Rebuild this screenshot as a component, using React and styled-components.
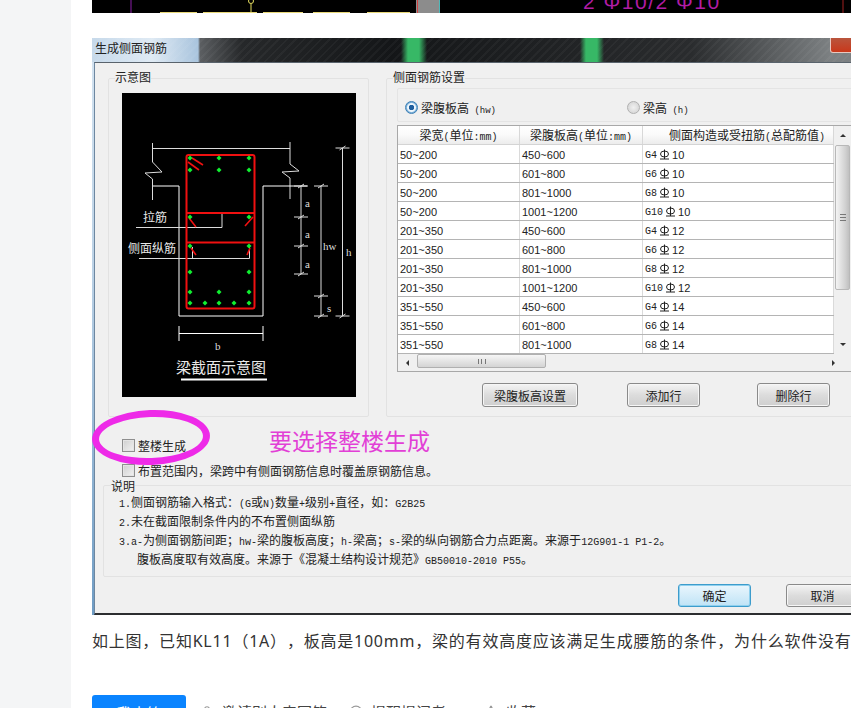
import React from 'react';
import styled, { createGlobalStyle } from 'styled-components';
import { User, Clock, Star } from 'lucide-react';

const cjk = `"Noto Sans CJK SC", sans-serif`;
const mono = `"Liberation Mono", "Noto Sans CJK SC", monospace`;

const rows = [
  ['50~200', '450~600', 'G4', '10'],
  ['50~200', '601~800', 'G6', '10'],
  ['50~200', '801~1000', 'G8', '10'],
  ['50~200', '1001~1200', 'G10', '10'],
  ['201~350', '450~600', 'G4', '12'],
  ['201~350', '601~800', 'G6', '12'],
  ['201~350', '801~1000', 'G8', '12'],
  ['201~350', '1001~1200', 'G10', '12'],
  ['351~550', '450~600', 'G4', '14'],
  ['351~550', '601~800', 'G6', '14'],
  ['351~550', '801~1000', 'G8', '14'],
];

const GlobalStyle = createGlobalStyle`
  html, body {
    margin: 0;
    height: 708px;
    overflow: hidden;
    background: #fff;
    font-family: ${cjk};
  }
`;

const Page = styled.div`
  display: flex;
  width: 851px;
  height: 708px;
  overflow: hidden;
`;

const Gutter = styled.div`
  width: 71px;
  flex: none;
  background: #f4f5f6;
`;

const Main = styled.main`
  flex: 1;
  min-width: 0;
  padding-left: 21px;
  overflow: hidden;
`;

const TopStrip = styled.svg`
  display: block;
  width: 759px;
  height: 13px;
  margin-bottom: 25px;
  background: #000;
`;

const Dialog = styled.div`
  position: relative;
  width: 790px;
  height: 577px;
  background: linear-gradient(180deg, #d5e4f1 0, #bcd2e6 40%, #6f9cc4 100%);
`;

const TitleBar = styled.div`
  display: flex;
  height: 24px;
  background:
    linear-gradient(90deg, transparent 309px, #37b866 316px, #37b866 327px, transparent 335px, transparent 488px, #37b866 494px, #37b866 505px, transparent 512px),
    repeating-linear-gradient(135deg, rgba(255, 255, 255, 0.035) 0 2px, transparent 2px 6px),
    linear-gradient(90deg, #c6d9ea 0, #dfeaf4 60px, #a9c4dd 106px, #5c5f62 108px, #26282a 150px, #141618 300px, #2a2c2e 600px, #7c8082 738px);
`;

const Title = styled.span`
  padding: 2px 0 0 3px;
  font-size: 12px;
  line-height: 16px;
  color: #222;
`;

const CloseButton = styled.div`
  width: 42px;
  height: 15px;
  margin-left: auto;
  margin-right: 10px;
  border: 1px solid #e8c8c0;
  border-top: 0;
  border-radius: 0 0 3px 3px;
  box-sizing: border-box;
  background: linear-gradient(180deg, #b9553d, #c9381b);
`;

const Body = styled.div`
  height: 553px;
  margin-left: 2px;
  padding-top: 8px;
  box-sizing: border-box;
  background: #f0f0f0;
  border-left: 1px solid #6d87a0;
  border-top: 1px solid #59636c;
  border-bottom: 2px solid #2c2e30;
`;

const TopRow = styled.div`
  display: flex;
  gap: 17px;
  margin-left: 13px;
`;

const Group = styled.fieldset`
  display: block;
  width: ${p => p.$width}px;
  flex: none;
  min-width: 0;
  margin: 0;
  padding: ${p => p.$padding};
  box-sizing: border-box;
  border: 1px solid #e2e2e2;
  border-radius: 2px;
`;

const NotesGroup = styled(Group)`
  margin: 1px 0 0 8px;
`;

const Legend = styled.legend`
  margin-left: ${p => p.$left}px;
  padding: 0;
  height: 14px;
  font-size: 12px;
  line-height: ${p => p.$line || 12}px;
  color: #222;
`;

const DiagramSvg = styled.svg`
  display: block;
  width: 234px;
  height: 304px;
  background: #000;
`;

const RadioBox = styled.div`
  display: flex;
  align-items: center;
  height: 34px;
  padding-left: 7px;
  box-sizing: border-box;
  border: 1px solid #e4e4e4;
  border-radius: 2px;
`;

const RadioLabel = styled.label`
  display: flex;
  align-items: center;
  gap: 3px;
  width: ${p => p.$width}px;
  margin-top: 4px;
  font-size: 12px;
  color: #222;
`;

const RadioDot = styled.span`
  width: 13px;
  height: 13px;
  flex: none;
  box-sizing: border-box;
  border-radius: 50%;
  border: 1px solid ${p => (p.$on ? '#3d7fb5' : '#b0b0b0')};
  background: ${p =>
    p.$on
      ? 'radial-gradient(circle, #1f5f9e 0 2.5px, #eef6fc 3px 4px, #7fb3da 5px)'
      : 'radial-gradient(circle, #f0f0f0 0, #d0d0d0 100%)'};
`;

const Mini = styled.span`
  font-family: ${mono};
  font-size: ${p => p.$size || 10}px;
  line-height: 1;
  white-space: pre;
`;

const BarCode = styled(Mini)`
  padding-top: 2px;
`;

const TableFrame = styled.div`
  width: 456px;
  margin-top: 3px;
  box-sizing: border-box;
  border: 1px solid #a8a8a8;
  border-right: 0;
  background: #fff;
`;

const TableTop = styled.div`
  display: flex;
  height: 228px;
  overflow: hidden;
`;

const Cells = styled.div`
  width: 436px;
  flex: none;
`;

const Row = styled.div`
  display: grid;
  grid-template-columns: 122px 123px 191px;
  height: 19px;
  box-sizing: border-box;
  border-bottom: 1px solid #b4b4b4;
`;

const HeadRow = styled(Row)`
  background: linear-gradient(180deg, #fff 0, #fafafa 50%, #ececec 100%);
  border-bottom: 1px solid #d4d4d4;
`;

const HeadCell = styled.div`
  padding-left: ${p => p.$shift || 0}px;
  font-size: 12px;
  line-height: 17px;
  text-align: center;
  color: #222;
  white-space: nowrap;
  overflow: hidden;
  border-right: 1px solid #d8d8d8;
`;

const Cell = styled.div`
  display: flex;
  align-items: center;
  gap: 2px;
  padding: 1px 0 0 2px;
  font-family: "Liberation Sans", sans-serif;
  font-size: 11px;
  color: #222;
  border-right: 1px solid #dadada;
`;

const VScroll = styled.div`
  width: 17px;
  flex: none;
  background: #f0f0f0;
  display: flex;
  flex-direction: column;
  align-items: center;
`;

const ArrowBox = styled.div`
  height: ${p => p.$h}px;
  width: ${p => p.$w || 17}px;
  display: flex;
  align-items: center;
  justify-content: center;
  flex: none;
`;

const Arrow = styled.span`
  width: 0;
  height: 0;
  border-style: solid;
  border-color: transparent;
  ${p => p.$dir === 'up' && 'border-width: 0 3px 3px; border-bottom-color: #333;'}
  ${p => p.$dir === 'down' && 'border-width: 3px 3px 0; border-top-color: #333;'}
  ${p => p.$dir === 'left' && 'border-width: 3px 3px 3px 0; border-right-color: #333;'}
  ${p => p.$dir === 'right' && 'border-width: 3px 0 3px 3px; border-left-color: #333;'}
`;

const VThumb = styled.div`
  width: 15px;
  height: 145px;
  flex: none;
  display: flex;
  align-items: center;
  justify-content: center;
  box-sizing: border-box;
  border: 1px solid #b8b8b8;
  border-radius: 2px;
  background: linear-gradient(90deg, #f4f4f4, #d2d2d2 70%, #c0c0c0);
`;

const VGrip = styled.span`
  width: 6px;
  height: 5px;
  border-top: 1px solid #777;
  border-bottom: 1px solid #777;
  background: linear-gradient(180deg, transparent 2px, #777 2px, #777 3px, transparent 3px);
`;

const Spacer = styled.div`
  flex: 1;
`;

const HScroll = styled.div`
  display: flex;
  align-items: center;
  height: 17px;
  background: #f0f0f0;
`;

const HThumb = styled.div`
  width: 129px;
  height: 14px;
  margin-top: -3px;
  box-sizing: border-box;
  border: 1px solid #b0b0b0;
  border-radius: 2px;
  background: linear-gradient(180deg, #f6f6f6, #d4d4d4);
  display: flex;
  align-items: center;
  justify-content: center;
`;

const HGrip = styled.span`
  width: 6px;
  height: 5px;
  border-left: 1px solid #777;
  border-right: 1px solid #777;
  background: linear-gradient(90deg, transparent 2px, #777 2px, #777 3px, transparent 3px);
`;

const ButtonRow = styled.div`
  display: flex;
  padding-left: ${p => p.$left}px;
  margin-top: ${p => p.$top}px;
`;

const WinButton = styled.button`
  width: ${p => p.$width}px;
  height: ${p => p.$height || 24}px;
  margin-left: ${p => p.$gap || 0}px;
  padding: 0;
  flex: none;
  font-family: ${cjk};
  font-size: 12px;
  color: #222;
  border-radius: 3px;
  border: 1px solid ${p => (p.$primary ? '#3d9ccc' : '#8a8a8a')};
  background: ${p =>
    p.$primary
      ? 'linear-gradient(180deg, #eaf6fd, #bfe3f6)'
      : 'linear-gradient(180deg, #f4f4f4, #dcdcdc 50%, #cfcfcf)'};
  box-shadow: ${p => (p.$primary ? 'inset 0 0 0 1px #8fd0ee' : 'inset 0 0 0 1px #f6f6f6')};
`;

const CheckRow = styled.div`
  display: flex;
  align-items: center;
  gap: 3px;
  height: 13px;
  margin: ${p => p.$top}px 0 0 27px;
  font-size: 12px;
  color: #222;
  white-space: nowrap;
`;

const CheckBox = styled.span`
  width: 13px;
  height: 13px;
  flex: none;
  box-sizing: border-box;
  border: 1px solid #8e8e8e;
  background: linear-gradient(135deg, #cfcfcf, #f2f2f2);
  box-shadow: inset 0 0 0 1px #e4e4e4;
`;

const Ellipse = styled.div`
  position: absolute;
  left: 0;
  top: 372px;
  width: 118px;
  height: 55px;
  box-sizing: border-box;
  border: 7px solid #ee2ae8;
  border-radius: 50%;
  transform: rotate(-2deg);
`;

const Annotation = styled.div`
  position: absolute;
  left: 177px;
  top: 387px;
  font-size: 23px;
  line-height: 30px;
  color: #e23fd6;
  white-space: nowrap;
`;

const Notes = styled.ul`
  list-style: none;
  margin: 0;
  padding: 0 0 8px 15px;
  font-size: 12px;
  color: #222;
  white-space: nowrap;
`;

const NoteLine = styled.li`
  height: 19px;
  line-height: 19px;
  padding-left: ${p => p.$indent || 0}px;
`;

const Question = styled.p`
  margin: 14px 0 0;
  font-family: "Noto Sans", "Noto Sans CJK SC", sans-serif;
  font-size: 16px;
  line-height: 24px;
  letter-spacing: 0.78px;
  text-spacing-trim: space-all;
  color: #333;
  white-space: nowrap;
`;

const Actions = styled.div`
  display: flex;
  align-items: flex-start;
  margin-top: 42px;
`;

const AnswerButton = styled.button`
  width: 94px;
  height: 35px;
  flex: none;
  padding: 0;
  border: 0;
  border-radius: 3px;
  background: #0a84ff;
  color: #fff;
  font-family: ${cjk};
  font-size: 15px;
`;

const Action = styled.div`
  display: flex;
  align-items: center;
  gap: 8px;
  margin: 6px 0 0 ${p => p.$gap}px;
  font-size: 15px;
  line-height: 22px;
  color: #444;
  white-space: nowrap;

  svg {
    width: 14px;
    height: 14px;
    color: #999;
  }
`;

const Rebar = () => (
  <svg width="11" height="11" viewBox="0 0 11 11" fill="none" stroke="#222" strokeWidth="1">
    <ellipse cx="5.5" cy="5" rx="4" ry="3" />
    <path d="M5.5 0.5V10M1 10H10" />
  </svg>
);

const strip = [[68, 105], [111, 165], [171, 211], [221, 258], [275, 318]];

const CadStrip = () => (
  <TopStrip viewBox="0 0 759 13">
    <path d="M39 0V13" stroke="#8a1fa8" />
    <path d="M159 4V13" stroke="#e8e060" />
    <circle cx="159" cy="1" r="2.5" fill="none" stroke="#e8e060" />
    {strip.map(([a, b]) => (
      <path key={a} d={`M${a} 12.5H${b}`} stroke="#e8d878" />
    ))}
    <rect x="324" y="0" width="24" height="13" fill="#8c8c8c" />
    <path d="M325.5 0V13" stroke="#d04040" />
    <path d="M347.5 0V13" stroke="#50b8b8" />
    <text x="491" y="9" fontFamily="Liberation Sans" fontSize="21" fill="#b01ca4" letterSpacing="1.5">2 Φ10/2 Φ10</text>
    <path d="M751 0V13" stroke="#a02020" />
  </TopStrip>
);

const greenDots = [
  [68, 65], [97, 65], [127, 65], [68, 77], [97, 77], [127, 77],
  [68, 124], [127, 124], [68, 153], [127, 153], [68, 179], [127, 179],
  [68, 199], [97, 199], [127, 199], [68, 210], [83, 210], [97, 210], [112, 210], [127, 210],
];

const Tick = ({ x, y, w = 7 }) => (
  <path d={`M${x - w} ${y}H${x + w}M${x - 3} ${y + 2}L${x + 3} ${y - 2}`} stroke="#ddd" strokeWidth="1" fill="none" />
);

const labelFont = { fontFamily: 'Noto Sans CJK SC', fill: '#e8e8e8' };
const dimFont = { fontFamily: 'Liberation Serif', fontSize: 11, fill: '#ddd' };

const Diagram = () => (
  <DiagramSvg viewBox="0 0 234 304">
    <g fill="none" stroke="#dcdcdc" strokeWidth="1">
      <path d="M31 55.5H168" />
      <path d="M30.5 50V69L40 79L23 80L30.5 86V107" />
      <path d="M168 49V71L177 78L160 79L168 85V106" />
      <path d="M31 93H57V223H141V93H185" stroke="#fff" />
      <path d="M179 93V181" />
      <path d="M199 93V223" />
      <path d="M220.5 55V223" />
      <path d="M57 240.5H141M57 233V248M141 233V248" stroke="#fff" />
      <path d="M14 134.5H100V120" />
      <path d="M17 165.5H127.5V154M70.5 165.5V154" />
    </g>
    <Tick x={179} y={93} />
    <Tick x={179} y={124} />
    <Tick x={179} y={153} />
    <Tick x={179} y={181} />
    <Tick x={199} y={93} />
    <Tick x={199} y={203} />
    <Tick x={199} y={223} />
    <Tick x={220.5} y={55} />
    <Tick x={220.5} y={223} />
    <g fill="none" stroke="#f01010">
      <rect x="64.5" y="62" width="68" height="153.5" rx="2" strokeWidth="2" />
      <path d="M64.5 120H132.5M64.5 149.5H132.5" strokeWidth="2" />
      <path d="M70 65L81 72M66 69L77 77" strokeWidth="1.6" />
      <path d="M67 125L74 134M131 124L123 133M69 155L74 162M128 155L125 162" strokeWidth="1.6" />
    </g>
    {greenDots.map(([x, y]) => (
      <path key={`${x}-${y}`} d={`M${x} ${y - 2.5}L${x + 2.5} ${y}L${x} ${y + 2.5}L${x - 2.5} ${y}Z`} fill="#10f030" />
    ))}
    <text x="21" y="129" fontSize="12" {...labelFont}>拉筋</text>
    <text x="6" y="160" fontSize="12" {...labelFont}>侧面纵筋</text>
    <text x="54" y="280" fontSize="15" {...labelFont}>梁截面示意图</text>
    <path d="M59 286.5H145" stroke="#fff" strokeWidth="2" />
    <text x="183" y="114" {...dimFont}>a</text>
    <text x="183" y="145" {...dimFont}>a</text>
    <text x="183" y="175" {...dimFont}>a</text>
    <text x="201" y="157" {...dimFont}>hw</text>
    <text x="205" y="219" {...dimFont}>s</text>
    <text x="224" y="163" {...dimFont}>h</text>
    <text x="93" y="257" {...dimFont}>b</text>
  </DiagramSvg>
);

const SteelTable = () => (
  <TableFrame>
    <TableTop>
      <Cells>
        <HeadRow>
          <HeadCell>梁宽<Mini>(</Mini>单位<Mini>:mm)</Mini></HeadCell>
          <HeadCell>梁腹板高<Mini>(</Mini>单位<Mini>:mm)</Mini></HeadCell>
          <HeadCell $shift={18}>侧面构造或受扭筋<Mini>(</Mini>总配筋值<Mini>)</Mini></HeadCell>
        </HeadRow>
        {rows.map((row, key) => (
          <Row key={key}>
            <Cell>{row[0]}</Cell>
            <Cell>{row[1]}</Cell>
            <Cell><BarCode>{row[2]}</BarCode><Rebar />{row[3]}</Cell>
          </Row>
        ))}
      </Cells>
      <VScroll>
        <ArrowBox $h={19}><Arrow $dir="up" /></ArrowBox>
        <VThumb><VGrip /></VThumb>
        <Spacer />
        <ArrowBox $h={19}><Arrow $dir="down" /></ArrowBox>
      </VScroll>
    </TableTop>
    <HScroll>
      <ArrowBox $h={17} $w={19}><Arrow $dir="left" /></ArrowBox>
      <HThumb><HGrip /></HThumb>
      <Spacer />
      <ArrowBox $h={17} $w={39}><Arrow $dir="right" /></ArrowBox>
    </HScroll>
  </TableFrame>
);

export default function App() {
  return (
    <Page>
      <GlobalStyle />
      <Gutter />
      <Main>
        <CadStrip />
        <Dialog>
          <TitleBar>
            <Title>生成侧面钢筋</Title>
            <CloseButton />
          </TitleBar>
          <Body>
            <TopRow>
              <Group $width={261} $padding="8px 13px 19px">
                <Legend $left={-7}>示意图</Legend>
                <Diagram />
              </Group>
              <Group $width={480} $padding="3px 10px 9px">
                <Legend $left={-4}>侧面钢筋设置</Legend>
                <RadioBox>
                  <RadioLabel $width={222}><RadioDot $on /><span>梁腹板高<Mini $size={9}> (hw)</Mini></span></RadioLabel>
                  <RadioLabel $width={120}><RadioDot /><span>梁高<Mini $size={9}> (h)</Mini></span></RadioLabel>
                </RadioBox>
                <SteelTable />
                <ButtonRow $left={85} $top={11}>
                  <WinButton $width={96}>梁腹板高设置</WinButton>
                  <WinButton $width={73} $gap={49}>添加行</WinButton>
                  <WinButton $width={73} $gap={57}>删除行</WinButton>
                </ButtonRow>
              </Group>
            </TopRow>
            <CheckRow $top={22}><CheckBox />整楼生成</CheckRow>
            <CheckRow $top={12}><CheckBox />布置范围内，梁跨中有侧面钢筋信息时覆盖原钢筋信息。</CheckRow>
            <NotesGroup $width={780} $padding="0">
              <Legend $left={7} $line={16}>说明</Legend>
              <Notes>
                <NoteLine><Mini>1.</Mini>侧面钢筋输入格式：<Mini>(G</Mini>或<Mini>N)</Mini>数量<Mini>+</Mini>级别<Mini>+</Mini>直径，如：<Mini>G2B25</Mini></NoteLine>
                <NoteLine><Mini>2.</Mini>未在截面限制条件内的不布置侧面纵筋</NoteLine>
                <NoteLine><Mini>3.a-</Mini>为侧面钢筋间距；<Mini>hw-</Mini>梁的腹板高度；<Mini>h-</Mini>梁高；<Mini>s-</Mini>梁的纵向钢筋合力点距离。来源于<Mini>12G901-1 P1-2</Mini>。</NoteLine>
                <NoteLine $indent={18}>腹板高度取有效高度。来源于《混凝土结构设计规范》<Mini>GB50010-2010 P55</Mini>。</NoteLine>
              </Notes>
            </NotesGroup>
            <ButtonRow $left={583} $top={7}>
              <WinButton $width={73} $height={23} $primary>确定</WinButton>
              <WinButton $width={73} $height={23} $gap={35}>取消</WinButton>
            </ButtonRow>
          </Body>
          <Ellipse />
          <Annotation>要选择整楼生成</Annotation>
        </Dialog>
        <Question>如上图，已知KL11（1A），板高是100mm，梁的有效高度应该满足生成腰筋的条件，为什么软件没有</Question>
        <Actions>
          <AnswerButton>我来答</AnswerButton>
          <Action $gap={14}><User />邀请别人来回答</Action>
          <Action $gap={22}><Clock />提醒提问者</Action>
          <Action $gap={38}><Star />收藏</Action>
        </Actions>
      </Main>
    </Page>
  );
}
